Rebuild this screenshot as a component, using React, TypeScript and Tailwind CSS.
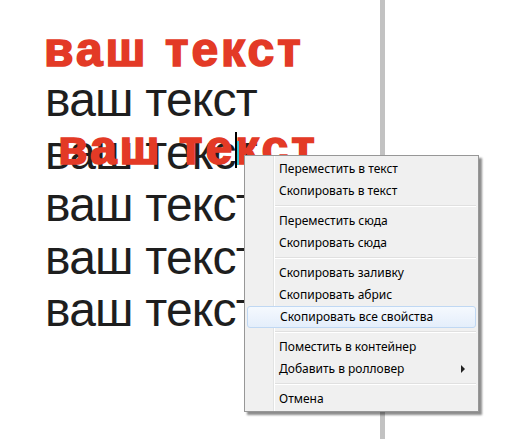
import React from "react";

type Item = { label: string; sep?: boolean; active?: boolean; sub?: boolean };

const items: Item[] = [
  { label: "Переместить в текст" },
  { label: "Скопировать в текст" },
  { label: "", sep: true },
  { label: "Переместить сюда" },
  { label: "Скопировать сюда" },
  { label: "", sep: true },
  { label: "Скопировать заливку" },
  { label: "Скопировать абрис" },
  { label: "Скопировать все свойства", active: true },
  { label: "", sep: true },
  { label: "Поместить в контейнер" },
  { label: "Добавить в ролловер", sub: true },
  { label: "", sep: true },
  { label: "Отмена" },
];

export default function App() {
  return (
    <div className="relative w-[509px] h-[439px] bg-white overflow-hidden flex">
      <div className="w-[380px] shrink-0 pt-[26px] pl-[44px] font-['Liberation_Sans',Arial,sans-serif]">
        <div className="text-[48px] leading-[48px] font-bold text-[#e33a26] tracking-[3px] [-webkit-text-stroke:1.6px_#e33a26] whitespace-nowrap">
          ваш текст
        </div>
        {[0, 1, 2, 3, 4].map((i) => (
          <div
            key={i}
            className="text-[48px] leading-[52.5px] text-[#1e1e1e] tracking-[-0.8px] pl-[1px] whitespace-nowrap"
          >
            ваш текст
          </div>
        ))}
      </div>
      <div className="w-[5px] shrink-0 bg-[#c2c2c2]" />
      <div className="flex-1" />

      <div className="absolute left-[58px] top-[124px] font-['Liberation_Sans',Arial,sans-serif] text-[48px] leading-[48px] font-bold text-[#e33a26] tracking-[3px] [-webkit-text-stroke:1.6px_#e33a26] whitespace-nowrap">
        ваш текст
      </div>
      <div className="absolute left-[235px] top-[132px] w-[2px] h-[36px] bg-black" />
      <div className="absolute left-[237px] top-[141px] w-[2px] h-[24px] bg-[#2ec4d6]" />

      <div className="absolute left-[244px] top-[155px] w-[235px] h-[257px] bg-[#f0f0f0] border border-[#979797] shadow-[3px_3px_2px_rgba(0,0,0,0.45)] font-['Noto_Sans',sans-serif] text-[12px] text-black">
        <div className="absolute left-[28px] top-0 bottom-0 w-[1px] bg-[#e2e3e3]" />
        <div className="absolute left-[29px] top-0 bottom-0 w-[1px] bg-white" />
        <div className="relative flex flex-col pt-[2px] px-[2px]">
          {items.map((it, i) =>
            it.sep ? (
              <div key={i} className="h-[8px] flex flex-col justify-center pl-[28px]">
                <div className="h-[1px] bg-[#e0e0e0]" />
                <div className="h-[1px] bg-white" />
              </div>
            ) : (
              <div
                key={i}
                className={
                  "relative h-[22px] flex items-center pl-[32px] whitespace-nowrap " +
                  (it.active
                    ? "rounded-[3px] border border-[#c0d8f3] bg-gradient-to-b from-[#f5f9fe] to-[#e4eefb] pl-[31px]"
                    : "")
                }
              >
                {it.label}
                {it.sub && (
                  <svg
                    className="absolute right-[10px] top-[7px]"
                    width="5"
                    height="8"
                    viewBox="0 0 5 8"
                  >
                    <path d="M0 0 L4 4 L0 8 Z" fill="#222" />
                  </svg>
                )}
              </div>
            )
          )}
        </div>
      </div>
    </div>
  );
}
